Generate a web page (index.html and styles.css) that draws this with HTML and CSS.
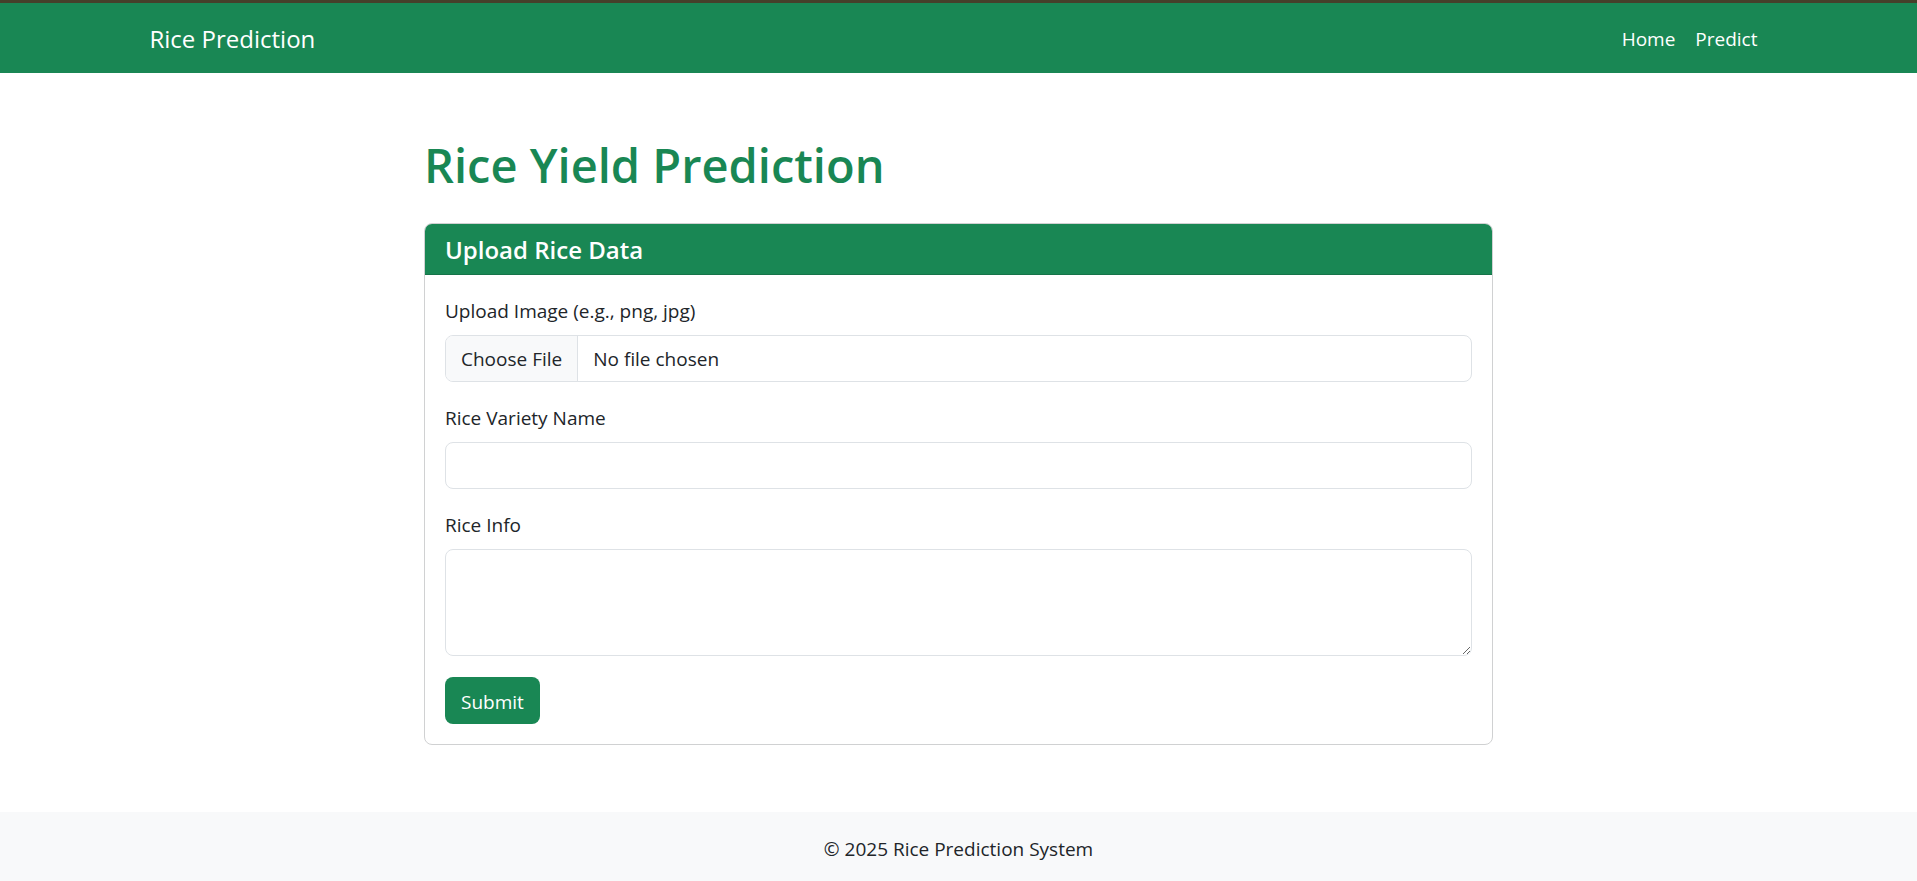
FILE: index.html
```html
<!DOCTYPE html>
<html lang="en">
<head>
  <meta charset="utf-8">
  <meta name="viewport" content="width=device-width, initial-scale=1">
  <title>Rice Prediction</title>
  <link rel="stylesheet" href="styles.css">
</head>
<body>
  <nav class="navbar">
    <div class="container navbar-inner">
      <a class="navbar-brand" href="#">Rice Prediction</a>
      <ul class="navbar-nav">
        <li><a class="nav-link" href="#">Home</a></li>
        <li><a class="nav-link" href="#">Predict</a></li>
      </ul>
    </div>
  </nav>

  <main class="content">
    <h1 class="page-title">Rice Yield Prediction</h1>
    <section class="card">
      <h2 class="card-header">Upload Rice Data</h2>
      <form class="card-body">
        <div class="field">
          <label for="image">Upload Image (e.g., png, jpg)</label>
          <input class="form-control form-file" type="file" id="image" accept="image/*">
        </div>
        <div class="field">
          <label for="variety">Rice Variety Name</label>
          <input class="form-control" type="text" id="variety">
        </div>
        <div class="field">
          <label for="info">Rice Info</label>
          <textarea class="form-control form-textarea" id="info" rows="3"></textarea>
        </div>
        <button class="btn" type="submit">Submit</button>
      </form>
    </section>
  </main>

  <footer class="footer">
    <p>© 2025 Rice Prediction System</p>
  </footer>
</body>
</html>
```

FILE: styles.css
```css
*,
*::before,
*::after {
  box-sizing: border-box;
}

body {
  margin: 0;
  min-height: 100vh;
  display: flex;
  flex-direction: column;
  background: #fff;
  color: #212529;
  font-family: "Segoe UI", "Open Sans", "Noto Sans", sans-serif;
  font-size: 19px;
  line-height: 30px;
}

.navbar {
  padding: 11px 0 9px;
  border-top: 3px solid #45402a;
  background: #198754;
}

.container {
  width: 100%;
  max-width: 1648px;
  margin: 0 auto;
  padding: 0 15px;
}

.navbar-inner {
  display: flex;
  align-items: center;
  justify-content: space-between;
}

.navbar a {
  color: #fff;
  text-decoration: none;
}

.navbar-brand {
  font-size: 24px;
}

.navbar-nav {
  display: flex;
  margin: 0;
  padding: 0;
  list-style: none;
}

.nav-link {
  display: block;
  padding: 10px;
}

.content {
  flex: 1;
  width: 100%;
  max-width: 1099px;
  margin: 0 auto;
  padding: 62px 15px 60px;
}

.page-title {
  margin: 0 0 28px;
  color: #198754;
  font-size: 47px;
  font-weight: 600;
  line-height: 60px;
}

.card {
  border: 1px solid #d0d1d2;
  border-radius: 8px;
  overflow: hidden;
}

.card-header {
  margin: 0;
  padding: 11px 20px 9px;
  border-bottom: 1px solid #167349;
  background: #198754;
  color: #fff;
  font-size: 24px;
  font-weight: 600;
  line-height: 30px;
}

.card-body {
  padding: 21px 20px 20px;
}

.field {
  display: flex;
  flex-direction: column;
  gap: 9px;
  margin-bottom: 21px;
}

.form-control {
  display: block;
  width: 100%;
  height: 47px;
  padding: 8px 15px;
  border: 1px solid #dee2e6;
  border-radius: 8px;
  background: #fff;
  color: #212529;
  font: inherit;
}

.form-file {
  padding: 0;
  line-height: 47px;
  overflow: hidden;
}

.form-file::file-selector-button {
  height: 47px;
  margin: 0 15px 0 0;
  padding: 0 15px;
  border: 0;
  border-right: 1px solid #dee2e6;
  background: #f8f9fa;
  color: #212529;
  font: inherit;
  line-height: 47px;
}

.form-textarea {
  height: 107px;
  resize: vertical;
}

.btn {
  display: block;
  height: 47px;
  padding: 2px 16px 0;
  border: 0;
  border-radius: 8px;
  background: #198754;
  color: #fff;
  font: inherit;
}

.footer {
  padding: 22px 20px 17px;
  background: #f8f9fa;
  text-align: center;
}

.footer p {
  margin: 0;
}
```
